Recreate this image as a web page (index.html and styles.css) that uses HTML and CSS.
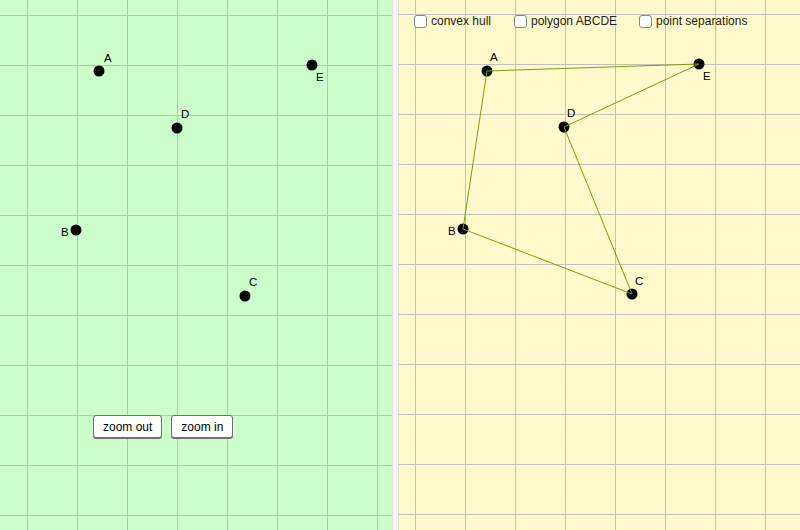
FILE: index.html
```html
<!DOCTYPE html>
<html>
<head>
<meta charset="utf-8">
<link rel="stylesheet" href="styles.css">
</head>
<body>
<div class="app">
  <div class="panel left">
    <svg class="canvas" width="392" height="530" viewBox="0 0 392 530">
      <g class="grid">
        <line x1="27.5" y1="0" x2="27.5" y2="530"/>
        <line x1="77.5" y1="0" x2="77.5" y2="530"/>
        <line x1="127.5" y1="0" x2="127.5" y2="530"/>
        <line x1="177.5" y1="0" x2="177.5" y2="530"/>
        <line x1="227.5" y1="0" x2="227.5" y2="530"/>
        <line x1="277.5" y1="0" x2="277.5" y2="530"/>
        <line x1="327.5" y1="0" x2="327.5" y2="530"/>
        <line x1="377.5" y1="0" x2="377.5" y2="530"/>
        <line x1="0" y1="15.5" x2="392" y2="15.5"/>
        <line x1="0" y1="65.5" x2="392" y2="65.5"/>
        <line x1="0" y1="115.5" x2="392" y2="115.5"/>
        <line x1="0" y1="165.5" x2="392" y2="165.5"/>
        <line x1="0" y1="215.5" x2="392" y2="215.5"/>
        <line x1="0" y1="265.5" x2="392" y2="265.5"/>
        <line x1="0" y1="315.5" x2="392" y2="315.5"/>
        <line x1="0" y1="365.5" x2="392" y2="365.5"/>
        <line x1="0" y1="415.5" x2="392" y2="415.5"/>
        <line x1="0" y1="465.5" x2="392" y2="465.5"/>
        <line x1="0" y1="515.5" x2="392" y2="515.5"/>
      </g>
      <g class="pts">
        <circle cx="99" cy="71" r="5.5"/>
        <circle cx="177" cy="128" r="5.5"/>
        <circle cx="312" cy="65" r="5.5"/>
        <circle cx="76" cy="230" r="5.5"/>
        <circle cx="245" cy="296" r="5.5"/>
      </g>
      <g class="lbl">
        <text x="104" y="62">A</text>
        <text x="181" y="118">D</text>
        <text x="316" y="81">E</text>
        <text x="61" y="236">B</text>
        <text x="249" y="286">C</text>
      </g>
    </svg>
    <div class="buttons">
      <button class="btn">zoom out</button>
      <button class="btn">zoom in</button>
    </div>
  </div>
  <div class="divider"></div>
  <div class="panel right">
    <svg class="canvas" width="401" height="530" viewBox="0 0 401 530">
      <g class="grid">
        <line x1="16.5" y1="0" x2="16.5" y2="530"/>
        <line x1="66.5" y1="0" x2="66.5" y2="530"/>
        <line x1="116.5" y1="0" x2="116.5" y2="530"/>
        <line x1="166.5" y1="0" x2="166.5" y2="530"/>
        <line x1="216.5" y1="0" x2="216.5" y2="530"/>
        <line x1="266.5" y1="0" x2="266.5" y2="530"/>
        <line x1="316.5" y1="0" x2="316.5" y2="530"/>
        <line x1="366.5" y1="0" x2="366.5" y2="530"/>
        <line x1="0" y1="14.5" x2="401" y2="14.5"/>
        <line x1="0" y1="64.5" x2="401" y2="64.5"/>
        <line x1="0" y1="114.5" x2="401" y2="114.5"/>
        <line x1="0" y1="164.5" x2="401" y2="164.5"/>
        <line x1="0" y1="214.5" x2="401" y2="214.5"/>
        <line x1="0" y1="264.5" x2="401" y2="264.5"/>
        <line x1="0" y1="314.5" x2="401" y2="314.5"/>
        <line x1="0" y1="364.5" x2="401" y2="364.5"/>
        <line x1="0" y1="414.5" x2="401" y2="414.5"/>
        <line x1="0" y1="464.5" x2="401" y2="464.5"/>
        <line x1="0" y1="514.5" x2="401" y2="514.5"/>
      </g>
      <g class="pts">
        <circle cx="88" cy="71" r="5.5"/>
        <circle cx="300" cy="64" r="5.5"/>
        <circle cx="165" cy="127" r="5.5"/>
        <circle cx="233" cy="294" r="5.5"/>
        <circle cx="64" cy="229" r="5.5"/>
      </g>
      <g class="spokes">
        <line x1="88" y1="71" x2="300" y2="64"/>
        <line x1="300" y1="64" x2="165" y2="127"/>
        <line x1="165" y1="127" x2="233" y2="294"/>
        <line x1="233" y1="294" x2="64" y2="229"/>
        <line x1="64" y1="229" x2="88" y2="71"/>
      </g>
      <g class="lbl">
        <text x="91" y="61">A</text>
        <text x="304" y="80">E</text>
        <text x="168" y="117">D</text>
        <text x="49" y="235">B</text>
        <text x="236" y="285">C</text>
      </g>
    </svg>
    <div class="checks">
      <label class="check"><span class="box"></span>convex hull</label>
      <label class="check"><span class="box"></span>polygon ABCDE</label>
      <label class="check"><span class="box"></span>point separations</label>
    </div>
  </div>
</div>
</body>
</html>
```

FILE: styles.css
```css
html, body {
  margin: 0;
  padding: 0;
  width: 800px;
  height: 530px;
  overflow: hidden;
  font-family: "Liberation Sans", Arial, sans-serif;
}
.app {
  display: flex;
  width: 800px;
  height: 530px;
}
.panel {
  position: relative;
  height: 530px;
}
.left {
  width: 392px;
  background: #ccffcc;
}
.right {
  width: 401px;
  background: #fff9cc;
}
.divider {
  width: 7px;
  height: 530px;
  background: #f6f6f6;
  box-sizing: border-box;
  border-left: 1px solid #e2e2e2;
  border-right: 1px solid #dcdcdc;
}
.canvas {
  display: block;
}
.grid line {
  stroke: #c0c0c0;
  stroke-width: 1;
}
.pts circle {
  fill: #000;
}
.spokes line {
  stroke: #7aa010;
  stroke-width: 1;
}
.lbl text {
  font-family: "Liberation Sans", Arial, sans-serif;
  font-size: 11.5px;
  fill: #000;
}
.buttons {
  position: absolute;
  left: 93px;
  top: 415px;
  display: flex;
  gap: 9px;
}
.btn {
  font-family: "Liberation Sans", Arial, sans-serif;
  font-size: 12px;
  color: #000;
  background: #fff;
  border: 1px solid #707070;
  border-radius: 3px;
  box-shadow: 0 1px 0 #707070;
  height: 23px;
  padding: 0 9px;
  margin: 0;
}
.checks {
  position: absolute;
  left: 15px;
  top: 13px;
  display: flex;
}
.check {
  display: flex;
  align-items: center;
  font-size: 12px;
  color: #222;
  height: 16px;
}
.check:nth-child(1) { width: 100px; }
.check:nth-child(2) { width: 125px; }
.box {
  width: 11px;
  height: 11px;
  background: #fff;
  border: 1.5px solid #888;
  border-radius: 3px;
  margin-right: 4px;
}
```
